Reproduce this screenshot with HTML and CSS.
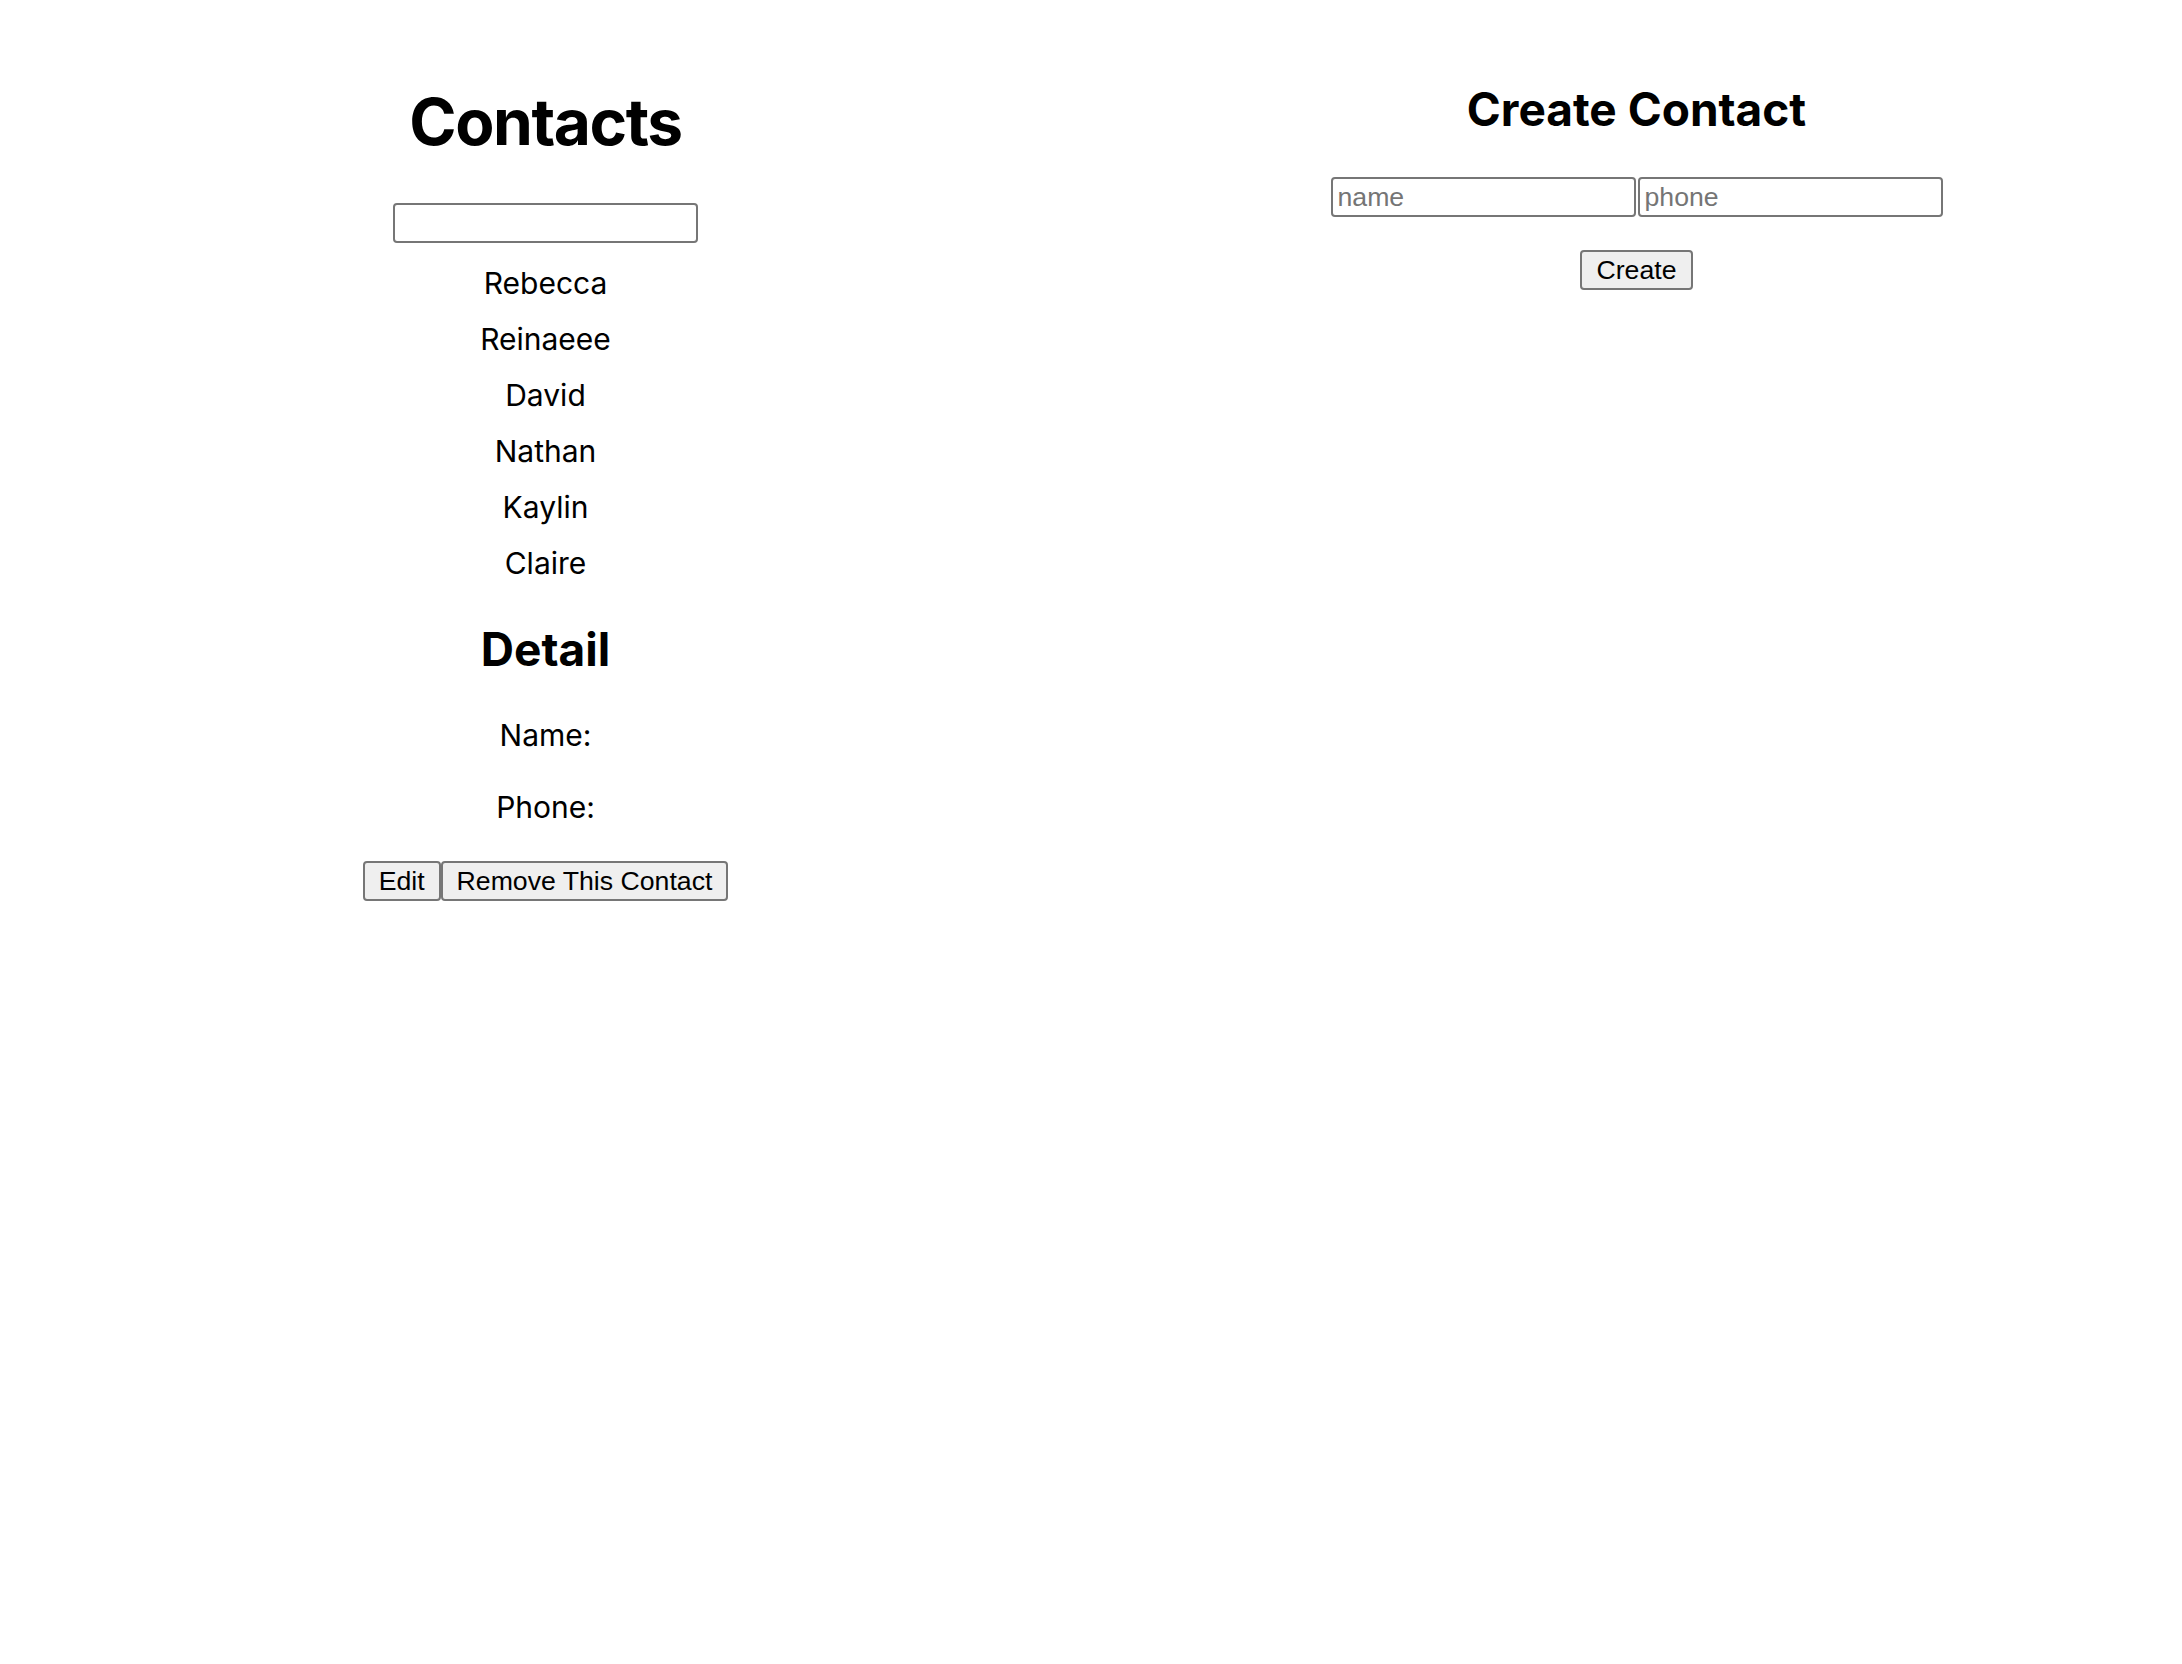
FILE: index.html
```html
<!DOCTYPE html>
<html>
<head>
<meta charset="utf-8">
<title>Contacts</title>
<link rel="stylesheet" href="styles.css">
</head>
<body>
<div class="app">
  <section class="col">
    <h1 class="title">Contacts</h1>
    <input class="field search" type="text">
    <ul class="list">
      <li class="item">Rebecca</li>
      <li class="item">Reinaeee</li>
      <li class="item">David</li>
      <li class="item">Nathan</li>
      <li class="item">Kaylin</li>
      <li class="item">Claire</li>
    </ul>
    <h2 class="subtitle detail-title">Detail</h2>
    <p class="info name-line">Name:</p>
    <p class="info phone-line">Phone:</p>
    <div class="actions"><button class="btn">Edit</button><button class="btn">Remove This Contact</button></div>
  </section>
  <section class="col">
    <h2 class="subtitle create-title">Create Contact</h2>
    <div class="form-row"><input class="field" type="text" placeholder="name"><input class="field" type="text" placeholder="phone"></div>
    <div class="create-row"><button class="btn">Create</button></div>
  </section>
</div>
</body>
</html>
```

FILE: styles.css
```css
html, body {
  margin: 0;
  padding: 0;
  background: #ffffff;
}

body {
  font-family: Inter, "Noto Sans", sans-serif;
  color: #000000;
}

.app {
  display: flex;
  width: 2182px;
}

.col {
  flex: 1 1 0;
  display: flex;
  flex-direction: column;
  align-items: center;
  text-align: center;
}

.title {
  font-size: 64px;
  font-weight: 700;
  letter-spacing: -1.4px;
  line-height: 80px;
  margin: 82px 0 41px;
}

.subtitle {
  font-size: 46px;
  font-weight: 700;
  line-height: 56px;
  margin: 0;
}

.create-title {
  margin-top: 81px;
}

.detail-title {
  margin-top: 30px;
}

.field {
  box-sizing: border-box;
  width: 305px;
  height: 40px;
  margin: 0;
  padding: 0 5px;
  border: 2px solid #767676;
  border-radius: 4px;
  font-family: "Liberation Sans", Arial, sans-serif;
  font-size: 26.67px;
  color: #000000;
  background: #ffffff;
}

.field::placeholder {
  color: #757575;
}

.list {
  list-style: none;
  margin: 12px 0 0;
  padding: 0;
}

.item {
  font-size: 30px;
  line-height: 56px;
}

.info {
  font-size: 30px;
  line-height: 40px;
  margin: 0;
}

.name-line {
  margin-top: 38px;
}

.phone-line {
  margin-top: 32px;
}

.actions {
  display: flex;
  margin-top: 34px;
}

.btn {
  box-sizing: border-box;
  height: 40px;
  margin: 0;
  padding: 0 14px;
  border: 2px solid #767676;
  border-radius: 4px;
  background: #efefef;
  font-family: "Liberation Sans", Arial, sans-serif;
  font-size: 26.67px;
  color: #000000;
}

.form-row {
  display: flex;
  gap: 2px;
  margin-top: 40px;
}

.create-row {
  margin-top: 33px;
}
```
